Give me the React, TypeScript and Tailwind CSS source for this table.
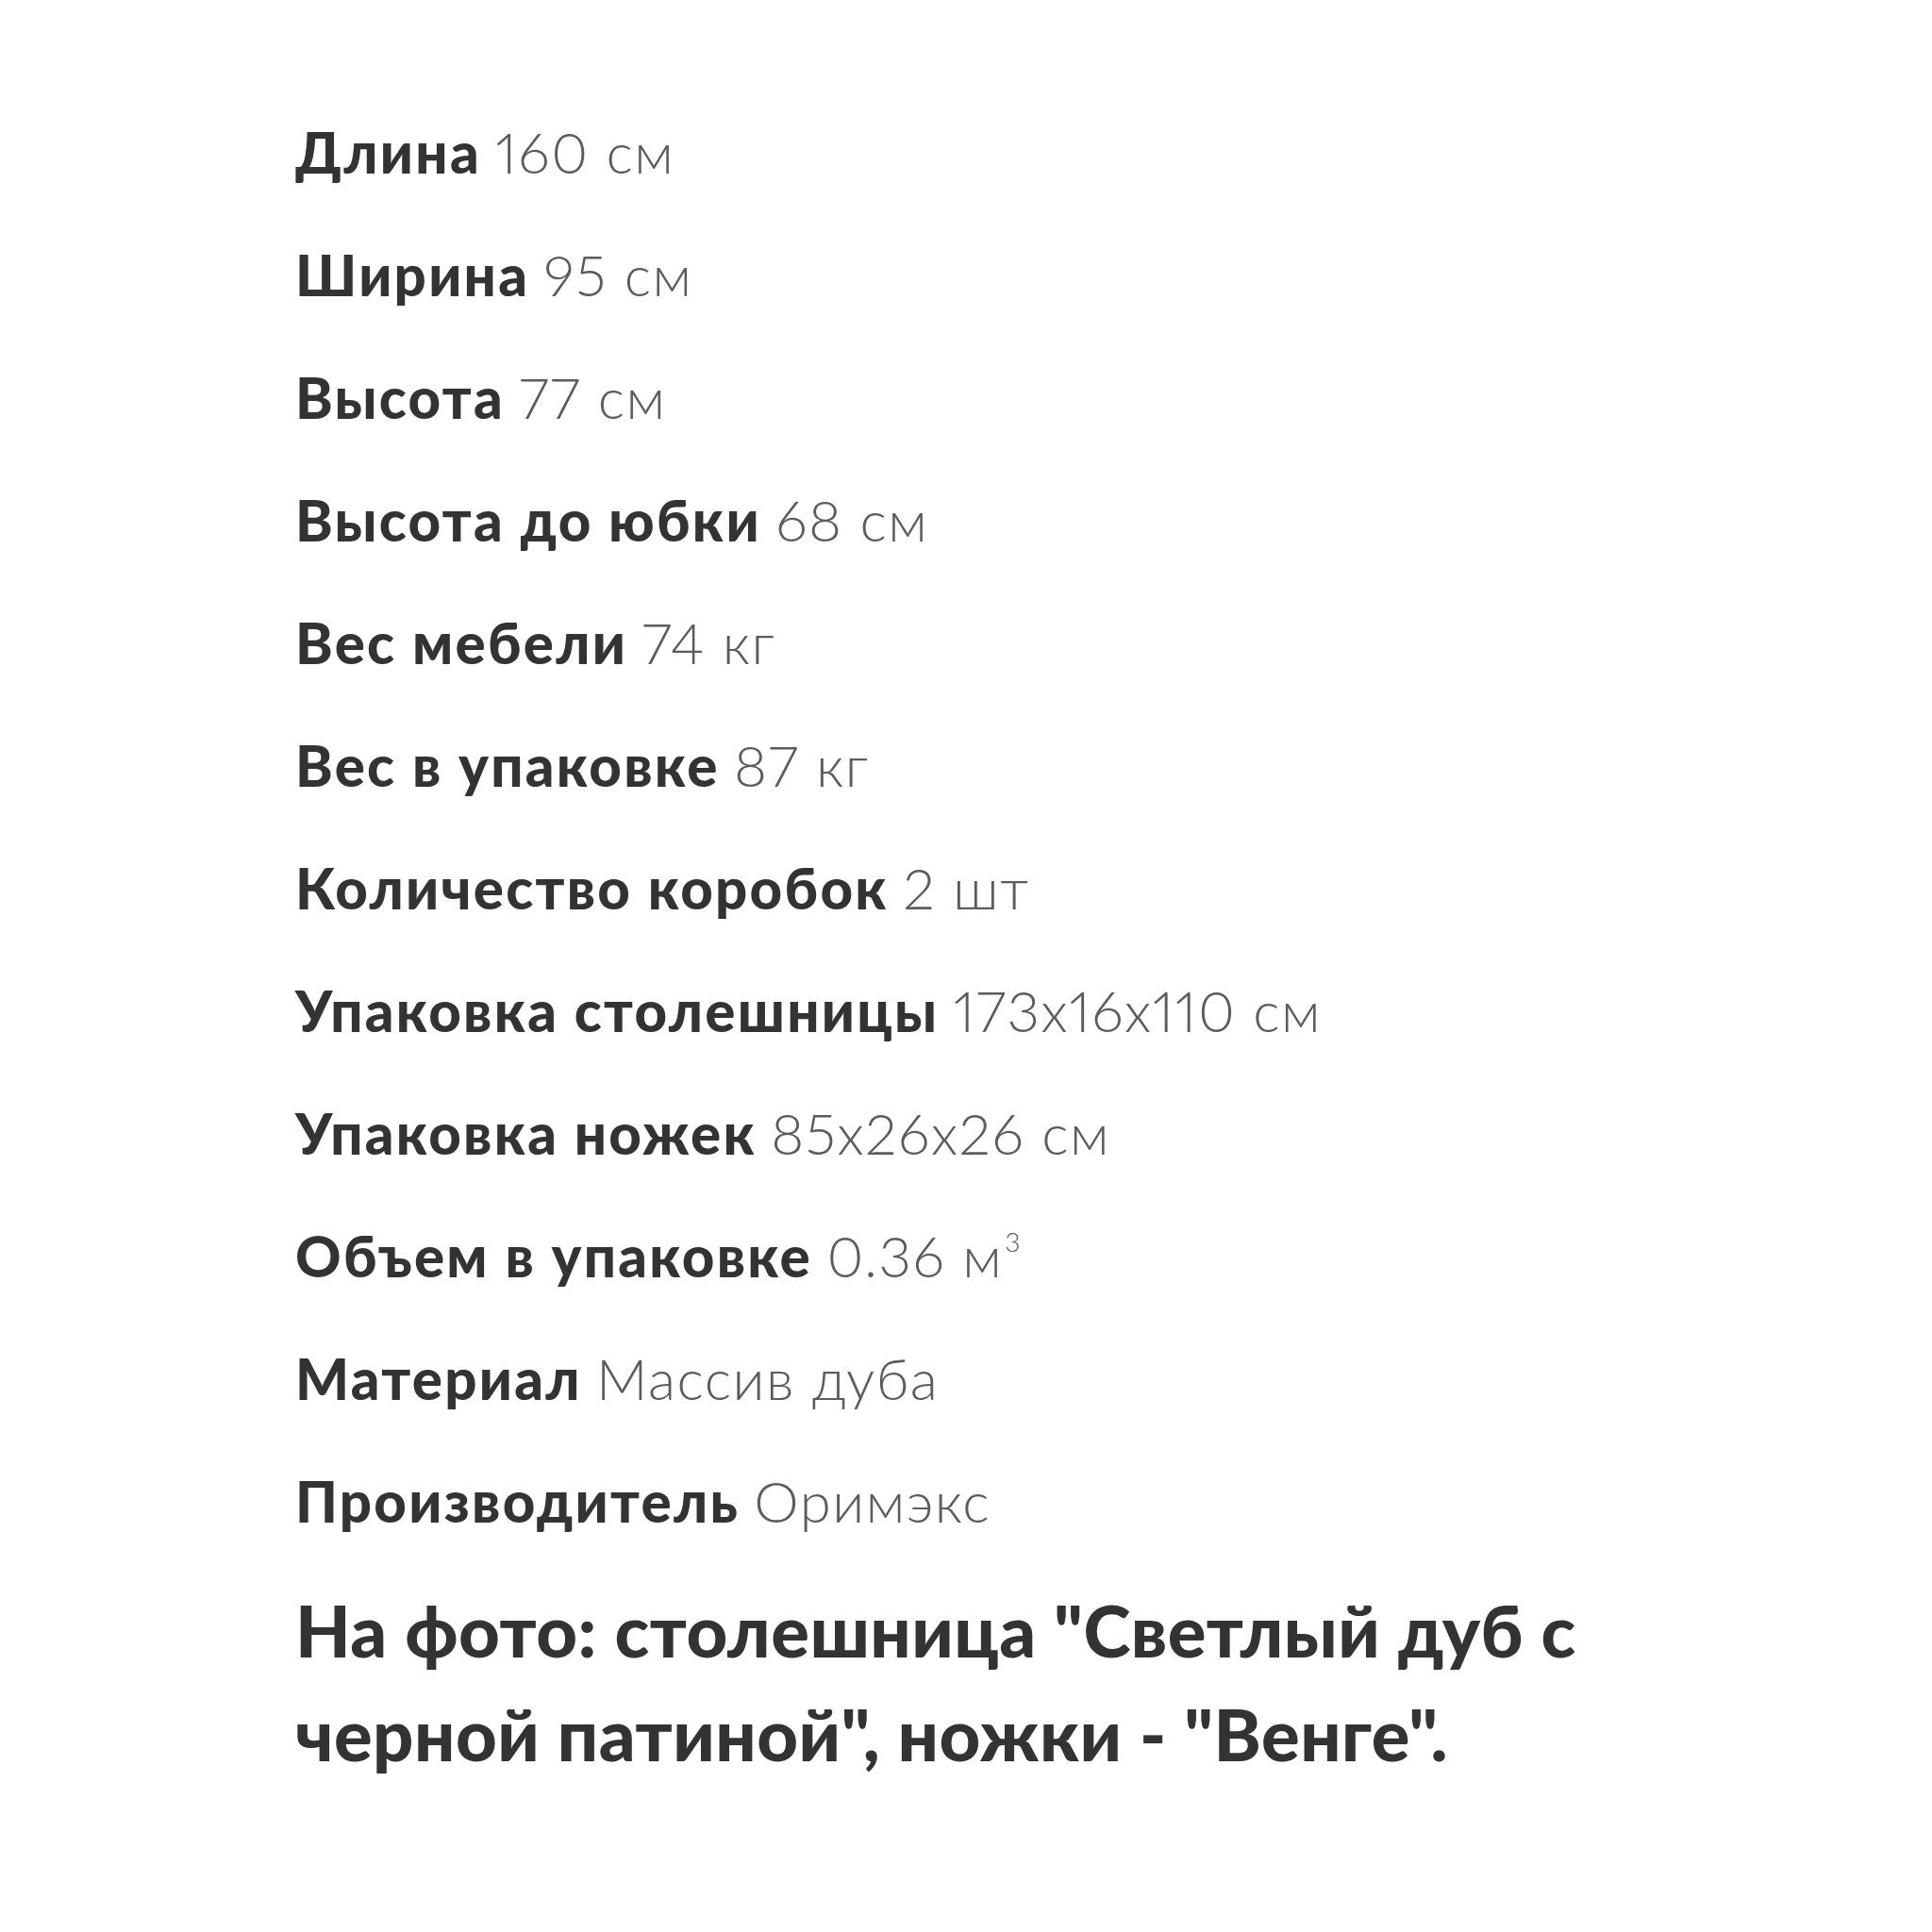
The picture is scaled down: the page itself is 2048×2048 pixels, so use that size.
import React from "react";

const rows: [string, React.ReactNode][] = [
  ["Длина", "160 см"],
  ["Ширина", "95 см"],
  ["Высота", "77 см"],
  ["Высота до юбки", "68 см"],
  ["Вес мебели", "74 кг"],
  ["Вес в упаковке", "87 кг"],
  ["Количество коробок", "2 шт"],
  ["Упаковка столешницы", "173x16x110 см"],
  ["Упаковка ножек", "85x26x26 см"],
  ["Объем в упаковке", <>0.36 м<sup className="text-[28px] top-[-0.95em] ml-[2px]">3</sup></>],
  ["Материал", "Массив дуба"],
  ["Производитель", "Оримэкс"],
];

export default function App() {
  return (
    <div className="w-[2048px] h-[2048px] bg-white" style={{ fontFamily: "Lato, 'Noto Sans', sans-serif" }}>
      <div className="pl-[313px] pt-[121px] w-[1720px]">
        {rows.map(([k, v], i) => (
          <div key={i} className="h-[130px] leading-[80px] text-[60px] whitespace-nowrap">
            <span className="font-black text-[#333333] tracking-[0.038em]">{k}</span>{" "}
            <span className="font-light text-[#5c5c5c] tracking-[0.025em] proportional-nums">{v}</span>
          </div>
        ))}
        <p className="mt-[-8px] w-[1400px] text-[76px] leading-[110px] font-black text-[#333333] tracking-[0.006em]">
          На фото: столешница "Светлый дуб с черной патиной", ножки - "Венге".
        </p>
      </div>
    </div>
  );
}
